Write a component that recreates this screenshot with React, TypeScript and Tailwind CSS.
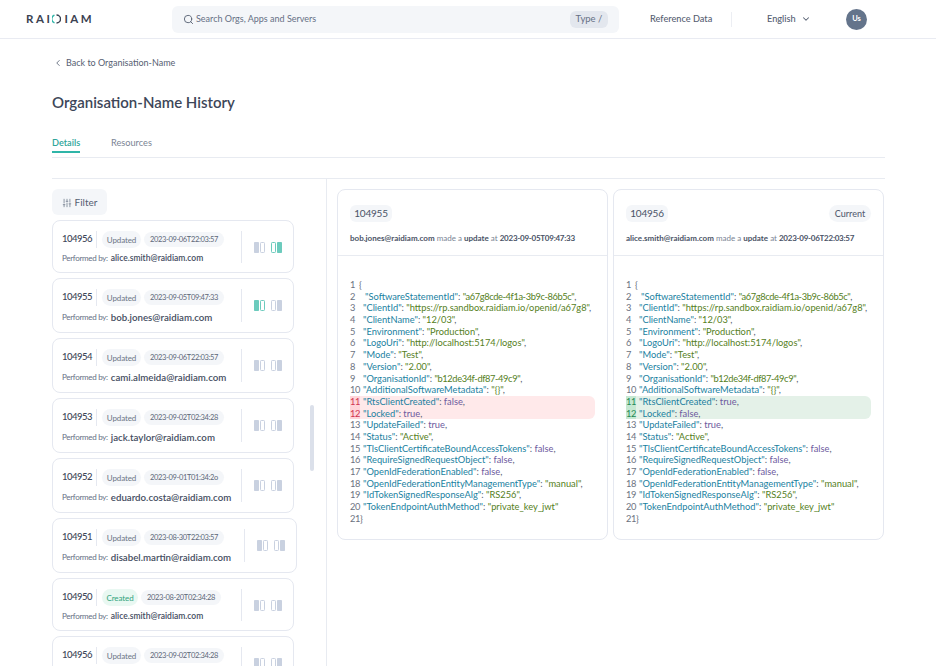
import { ChevronDown, ChevronLeft, Search, SlidersHorizontal } from 'lucide-react';

type Row = {
  id: string;
  status: string;
  date: string;
  user: string;
  big?: boolean;
  side?: 'left' | 'right';
  wide?: boolean;
};

const rows: Row[] = [
  { id: '104956', status: 'Updated', date: '2023-09-06T22:03:57', user: 'alice.smith@raidiam.com', side: 'right' },
  { id: '104955', status: 'Updated', date: '2023-09-05T09:47:33', user: 'bob.jones@raidiam.com', big: true, side: 'left' },
  { id: '104954', status: 'Updated', date: '2023-09-06T22:03:57', user: 'cami.almeida@raidiam.com', big: true },
  { id: '104953', status: 'Updated', date: '2023-09-02T02:34:28', user: 'jack.taylor@raidiam.com', big: true },
  { id: '104952', status: 'Updated', date: '2023-09-01T01:34:2o', user: 'eduardo.costa@raidiam.com', big: true },
  { id: '104951', status: 'Updated', date: '2023-08-30T22:03:57', user: 'disabel.martin@raidiam.com', big: true, wide: true },
  { id: '104950', status: 'Created', date: '2023-08-20T02:34:28', user: 'alice.smith@raidiam.com' },
  { id: '104956', status: 'Updated', date: '2023-09-02T02:34:28', user: 'alice.smith@raidiam.com' },
];

// [key, value, kind of value]
const lines: [string, string, 's' | 'b'][] = [
  ['SoftwareStatementId', 'a67g8cde-4f1a-3b9c-86b5c', 's'],
  ['ClientId', 'https://rp.sandbox.raidiam.io/openid/a67g8', 's'],
  ['ClientName', '12/03', 's'],
  ['Environment', 'Production', 's'],
  ['LogoUri', 'http://localhost:5174/logos', 's'],
  ['Mode', 'Test', 's'],
  ['Version', '2.00', 's'],
  ['OrganisationId', 'b12de34f-df87-49c9', 's'],
  ['AdditionalSoftwareMetadata', '{}', 's'],
  ['RtsClientCreated', 'false', 'b'],
  ['Locked', 'true', 'b'],
  ['UpdateFailed', 'true', 'b'],
  ['Status', 'Active', 's'],
  ['TlsClientCertificateBoundAccessTokens', 'false', 'b'],
  ['RequireSignedRequestObject', 'false', 'b'],
  ['OpenIdFederationEnabled', 'false', 'b'],
  ['OpenIdFederationEntityManagementType', 'manual', 's'],
  ['IdTokenSignedResponseAlg', 'RS256', 's'],
  ['TokenEndpointAuthMethod', 'private_key_jwt', 's'],
];

function DiffIcon({ flip, on }: { flip?: boolean; on?: boolean }) {
  const fill = on ? '#6ccbbd' : '#c9d1e0';
  return (
    <svg width="11" height="11" viewBox="0 0 11 11" className="shrink-0">
      <rect x={flip ? 6 : 0} y="0" width="5" height="11" rx="0.8" fill={fill} />
      <rect x={flip ? 0.5 : 6.5} y="0.5" width="4" height="10" rx="0.8" fill="none" stroke={fill} />
    </svg>
  );
}

function HistoryCard({ row }: { row: Row }) {
  const created = row.status === 'Created';
  return (
    <div className={`flex shrink-0 items-start rounded-lg border border-[#e5e8f0] bg-white pt-[10px] pl-[9px] ${row.wide ? 'w-[245px]' : 'w-[242px]'} ${row.big ? 'h-[55px]' : 'h-[53px]'}`}>
      <div className="flex-1 whitespace-nowrap">
        <div className="flex h-[17px] items-center">
          <span className="w-[34px] text-[9.5px] font-medium tracking-[-0.5px] text-[#3d4658]">{row.id}</span>
          <span className="h-[17px] w-px bg-[#e5e8f0]" />
          <span className={`ml-[5px] flex h-[17px] items-center justify-center rounded-full text-[8px] tracking-[-0.1px] ${created ? 'w-[36px] bg-[#e9f8f2] text-[#2fa37b]' : 'w-[39px] bg-[#f4f6f9] text-[#6b7585]'}`}>
            {row.status}
          </span>
          <span className="ml-[3px] flex h-[15px] w-[80px] items-center justify-center rounded-full bg-[#f4f6f9] text-[7.5px] tracking-[-0.35px] text-[#5d6778]">{row.date}</span>
        </div>
        <div className={`flex items-center text-[8px] leading-3 tracking-[-0.3px] text-[#667085] ${row.big ? 'mt-[5px]' : 'mt-[4px]'}`}>
          Performed by:
          <span className={`ml-[3px] font-semibold tracking-normal text-[#434c60] ${row.big ? 'text-[9.7px]' : 'text-[8.5px]'}`}>{row.user}</span>
        </div>
      </div>
      <div className={`flex w-[52px] items-center gap-1.5 border-l border-[#e5e8f0] pl-[12px] ${row.big ? 'h-[33px]' : 'h-[32px]'}`}>
        <DiffIcon on={row.side === 'left'} />
        <DiffIcon flip on={row.side === 'right'} />
      </div>
    </div>
  );
}

function CodePanel({ id, user, date, current, tone }: { id: string; user: string; date: string; current?: boolean; tone: 'del' | 'add' }) {
  const changed = (n: number) => n === 11 || n === 12;
  const bg = tone === 'del' ? 'bg-[#ffe9ea]' : 'bg-[#e4f1e8]';
  const num = tone === 'del' ? 'bg-[#ffd5da] text-[#d0344f]' : 'bg-[#c6e8d2] text-[#1f8a55]';
  const vals = tone === 'del' ? { 11: 'false', 12: 'true' } : { 11: 'true', 12: 'false' };
  return (
    <div className="h-[351px] w-[271px] shrink-0 rounded-lg border border-[#e5e8f0] bg-white">
      <div className="h-[66px] border-b border-[#e8ebf1] pt-[15px] pr-[12px] pl-[12px]">
        <div className="flex items-center justify-between">
          <span className="flex h-[17px] w-[42px] items-center justify-center rounded-md bg-[#f4f6f9] text-[10px] tracking-[-0.2px] text-[#4a5366]">{id}</span>
          {current && <span className="flex h-[17px] w-[42px] items-center justify-center rounded-full bg-[#f4f6f9] text-[9px] font-medium text-[#566072]">Current</span>}
        </div>
        <p className="mt-[10px] text-[8px] leading-3 whitespace-nowrap text-[#7a8494]">
          <b className="font-bold text-[#4a5366]">{user}</b> made a <b className="font-bold text-[#4a5366]">update</b> at{' '}
          <b className="font-bold tracking-[-0.25px] text-[#4a5366]">{date}</b>
        </p>
      </div>
      <div className="pt-[23px] pl-[12px] text-[9.3px] leading-[11.7px] whitespace-nowrap">
        <div className="flex h-[11.7px]">
          <span className="w-[9px] text-[#6b7280]">1</span>
          <span className="text-[#6b7280]">{'{'}</span>
        </div>
        {lines.map(([k, v, kind], i) => {
          const n = i + 2;
          const hit = changed(n);
          const value = hit ? vals[n as 11 | 12] : v;
          const hex = v.includes('-');
          return (
            <div key={k} className={`flex h-[11.7px] w-[245px] ${hit ? bg : ''} ${n === 11 ? 'rounded-tr-md' : ''} ${n === 12 ? 'rounded-br-md' : ''}`}>
              <span className={`w-[10px] tracking-[-0.3px] ${hit ? num : 'text-[#6b7280]'}`}>{n}</span>
              <span className={n === 2 ? 'pl-[5px]' : 'pl-[3px]'}>
                <span className="text-[#1a7f9f]">"{k}"</span>
                <span className="text-[#566072]">: </span>
                {kind === 's' ? <span className={`text-[#55801c] ${hex ? 'tracking-[-0.4px]' : ''}`}>"{value}"</span> : <span className="text-[#6d5a9e]">{value}</span>}
                <span className="text-[#566072]">{n < 20 ? ',' : ''}</span>
              </span>
            </div>
          );
        })}
        <div className="flex h-[11.7px]">
          <span className="w-[10px] tracking-[-0.3px] text-[#6b7280]">21</span>
          <span className="text-[#6b7280]">{'}'}</span>
        </div>
      </div>
    </div>
  );
}

export default function App() {
  return (
    <div className="relative h-[666px] w-[936px] overflow-hidden bg-white font-['Lato',sans-serif] text-[#434c60]">
      <header className="flex h-[39px] items-center border-b border-[#e9ebf2] pl-[26px]">
        <div className="flex w-[146px] items-center text-[11.5px] font-bold tracking-[0.22em] text-[#3b4252]">
          RAI
          <svg width="9" height="10" viewBox="0 0 9 10" className="mr-[3px]">
            <path d="M2.5 1.2A4 4 0 0 0 2.5 8.8" fill="none" stroke="#2fb5a8" strokeWidth="1.4" />
            <path d="M4.5 1A4 4 0 0 1 4.5 9" fill="none" stroke="#3b4252" strokeWidth="1.4" />
          </svg>
          IAM
        </div>
        <div className="flex h-[27px] w-[447px] items-center rounded-md bg-[#f4f6f9] pr-[11px] pl-[11px]">
          <Search size={11} className="text-[#566072]" strokeWidth={2} />
          <span className="ml-[2px] flex-1 text-[9px] text-[#667085]">Search Orgs, Apps and Servers</span>
          <span className="flex h-[17px] w-[38px] items-center justify-center rounded-md bg-[#e3e7ee] text-[9.5px] text-[#667085]">Type /</span>
        </div>
        <span className="ml-[31px] w-[61px] text-[9.2px] font-medium whitespace-nowrap text-[#566072]">Reference Data</span>
        <span className="ml-[20px] h-[15px] w-px bg-[#eceef3]" />
        <span className="ml-[35px] w-[28px] text-[9.2px] font-medium text-[#566072]">English</span>
        <ChevronDown size={10} strokeWidth={2.5} className="ml-[6px] text-[#566072]" />
        <span className="ml-[35px] flex h-[21px] w-[21px] items-center justify-center rounded-full bg-[#64748b] text-[7.5px] font-bold text-white">Us</span>
      </header>

      <main className="pl-[52px]">
        <div className="flex h-[47px] items-center pt-[1px]">
          <ChevronLeft size={10} strokeWidth={2} className="ml-[1px] text-[#566072]" />
          <span className="ml-[3px] text-[9px] text-[#566072]">Back to Organisation-Name</span>
        </div>
        <h1 className="mt-[6px] text-[15px] leading-5 font-semibold text-[#3d4658]">Organisation-Name History</h1>

        <div className="mt-[21px] flex h-[25px] w-[833px] border-b border-[#e8ebf1]">
          <div className="h-[20px] w-[28px] border-b-2 border-[#2fb5a8] pt-[4px] text-[9.2px] leading-3 font-semibold whitespace-nowrap text-[#2fa59a]">Details</div>
          <div className="ml-[31px] pt-[4px] text-[9.2px] leading-3 text-[#7a8494]">Resources</div>
        </div>

        <div className="mt-[20px] flex w-[833px] border-t border-[#e8ebf1]">
          <div className="h-[500px] w-[275px] shrink-0 border-r border-[#e8ebf1] pt-[10px]">
            <button className="flex h-[26px] w-[55px] items-center justify-center gap-[3px] rounded-md bg-[#f4f6f9] pt-[1px] text-[10px] text-[#566072]">
              <SlidersHorizontal size={10} className="rotate-90 text-[#7a8494]" />
              Filter
            </button>
            <div className="mt-[5px] flex flex-col gap-[5px]">
              {rows.map((row, i) => (
                <HistoryCard key={i} row={row} />
              ))}
            </div>
          </div>
          <div className="flex gap-[5px] pt-[10px] pl-[10px]">
            <CodePanel id="104955" user="bob.jones@raidiam.com" date="2023-09-05T09:47:33" tone="del" />
            <CodePanel id="104956" user="alice.smith@raidiam.com" date="2023-09-06T22:03:57" current tone="add" />
          </div>
        </div>
      </main>

      {/* list scrollbar sits over the column */}
      <div className="absolute top-[405px] left-[310px] h-[66px] w-[4px] rounded-full bg-[#dbe0ea]" />
    </div>
  );
}
